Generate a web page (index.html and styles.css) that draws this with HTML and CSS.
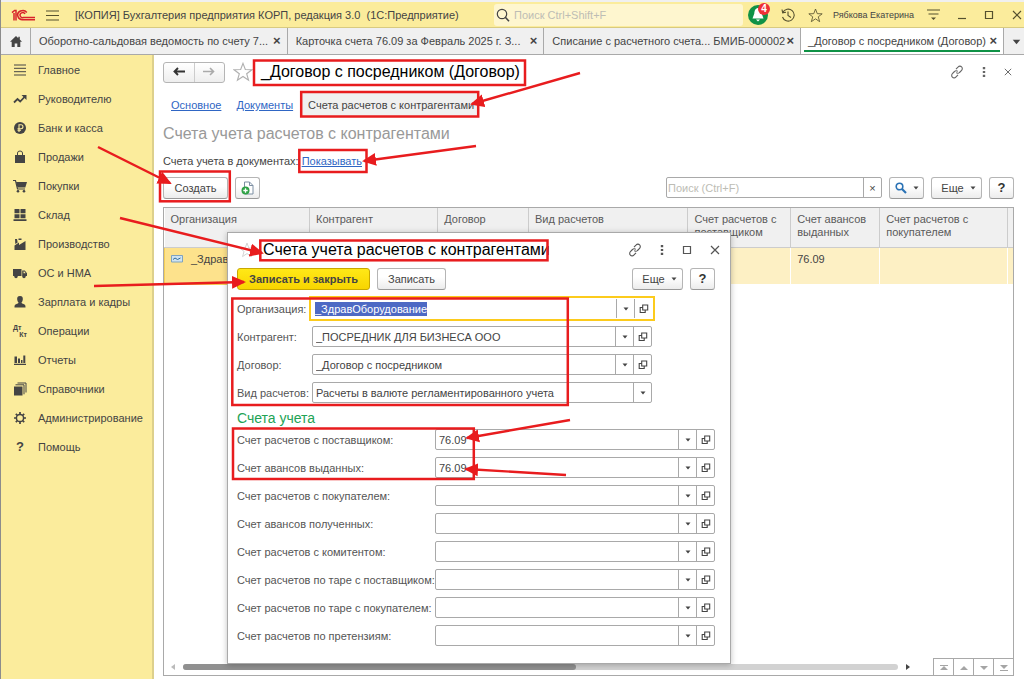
FILE: index.html
```html
<!DOCTYPE html>
<html lang="ru">
<head>
  <meta charset="UTF-8" />
  <meta name="viewport" content="width=device-width, initial-scale=1.0" />
  <title>Бухгалтерия предприятия КОРП</title>
  <link rel="stylesheet" href="styles.css">
</head>
<body>
  <!-- shared icons -->
  <svg class="sprite" width="0" height="0">
    <symbol id="i-star" viewBox="0 0 18 18"><path d="M9 1.2l2.1 5.6 5.9.2-4.700 3.600 1.700 5.800L9 13l-5 3.400 1.700-5.800L1 7l5.900-.2z" fill="none" stroke="currentColor" stroke-linejoin="miter"/></symbol>
    <symbol id="i-link" viewBox="0 0 14 14"><path d="M6 4.200l2.200-2.300a2.300 2.300 0 0 1 3.400 0 2.400 2.400 0 0 1 0 3.400L9.500 7.500A2.300 2.300 0 0 1 6.200 7.600M8 9.800l-2.200 2.300a2.300 2.300 0 0 1-3.400 0 2.400 2.400 0 0 1 0-3.400l2.100-2.200a2.300 2.300 0 0 1 3.300-.1" fill="none" stroke="currentColor" stroke-width="1.100"/></symbol>
    <symbol id="i-dots" viewBox="0 0 4 12"><path d="M.8 1h2.400v2.200H.8zM.8 4.900h2.400v2.200H.8zM.8 8.800h2.400V11H.8z" fill="currentColor"/></symbol>
    <symbol id="i-x" viewBox="0 0 10 10"><path d="M1 1l8 8M9 1L1 9" fill="none" stroke="currentColor" stroke-width="1.200"/></symbol>
    <symbol id="i-square" viewBox="0 0 10 10"><path d="M1.500 1.500h7v7h-7z" fill="none" stroke="currentColor" stroke-width="1.200"/></symbol>
    <symbol id="i-down" viewBox="0 0 6 4"><path d="M.5.5h5L3 3.500z" fill="currentColor"/></symbol>
    <symbol id="i-open" viewBox="0 0 10 10"><path d="M3.700 1h5v5h-5zM3.500 3.500H1.200v5h5V6.500" fill="none" stroke="currentColor" stroke-width="1.100"/></symbol>
    <symbol id="i-zoom" viewBox="0 0 14 14"><circle cx="6" cy="6" r="4.700" fill="none" stroke="currentColor" stroke-width="1.200"/><path d="M9.300 9.300l3.700 4" stroke="currentColor" stroke-width="1.600"/></symbol>
  </svg>

  <div class="app">
    <header class="titlebar">
      <svg class="logo" width="24" height="12" viewBox="0 0 24 12"><path d="M1 3.600L3.600 1.500H5V11.500M3 4v7.500M15.800 3.500A5 4.600 0 1 0 12.500 10.700H24M14 5A2.600 2.500 0 1 0 12.500 8.500H24" fill="none" stroke="#d8232a" stroke-width="1.500"/></svg>
      <button class="icon-btn" aria-label="Меню"><svg width="13" height="11" viewBox="0 0 13 11"><path d="M0 1h13M0 5.500h13M0 10h13" stroke="currentColor" stroke-width="1.100"/></svg></button>
      <span class="app-title">[КОПИЯ] Бухгалтерия предприятия КОРП, редакция 3.0&nbsp; (1С:Предприятие)</span>
      <label class="top-search">
        <svg width="14" height="14"><use href="#i-zoom"/></svg>
        <input type="text" placeholder="Поиск Ctrl+Shift+F" aria-label="Поиск">
      </label>
      <div class="title-tools">
        <button class="bell" aria-label="Оповещения">
          <svg width="20" height="20" viewBox="0 0 20 20"><circle cx="10" cy="10" r="10" fill="#0f9246"/><path d="M10 3c-3 .5-3.500 3-3.700 5.500L4.500 13.500h11l-1.800-5C13.500 6 13 3.500 10 3zM8 14.500h4l-2 2z" fill="#fff"/></svg>
          <span class="badge">4</span>
        </button>
        <button class="icon-btn" aria-label="История"><svg width="14" height="14" viewBox="0 0 14 14"><path d="M1.800 4.500A6 6 0 1 1 1.500 9M1 1.500l.7 3.300L5 4.300M7 3.500V7.500l3 2" fill="none" stroke="currentColor" stroke-width="1.100"/></svg></button>
        <button class="icon-btn" aria-label="Избранное"><svg width="15" height="15"><use href="#i-star"/></svg></button>
        <span class="user">Рябкова Екатерина</span>
        <button class="icon-btn" aria-label="Настройки"><svg width="13" height="12" viewBox="0 0 13 12"><path d="M0 1h13M1.500 5h10" stroke="currentColor" stroke-width="1.200"/><path d="M4 8.500h5L6.500 11z" fill="currentColor"/></svg></button>
      </div>
      <div class="window-tools">
        <button class="icon-btn" aria-label="Свернуть"><svg width="8" height="10" viewBox="0 0 8 10"><path d="M0 8.500h8" stroke="currentColor" stroke-width="1.200"/></svg></button>
        <button class="icon-btn" aria-label="Развернуть"><svg width="10" height="10"><use href="#i-square"/></svg></button>
        <button class="icon-btn" aria-label="Закрыть"><svg width="10" height="10"><use href="#i-x"/></svg></button>
      </div>
    </header>

    <nav class="tabs">
      <a class="home" href="#" aria-label="Начальная страница"><svg width="12" height="11" viewBox="0 0 12 11"><path d="M6 0L0 5.800h1.700V11h3V7.500h2.600V11h3V5.800H12L9.800 3.600V.8H8.300v1.400z" fill="currentColor"/></svg></a>
      <div class="tab"><a href="#">Оборотно-сальдовая ведомость по счету 7...</a><button aria-label="Закрыть">×</button></div>
      <div class="tab"><a href="#">Карточка счета 76.09 за Февраль 2025 г. З...</a><button aria-label="Закрыть">×</button></div>
      <div class="tab"><a href="#">Списание с расчетного счета... БМИБ-000002</a><button aria-label="Закрыть">×</button></div>
      <div class="tab active"><a href="#">_Договор с посредником (Договор)</a><button aria-label="Закрыть">×</button></div>
      <button class="tab-more" aria-label="Все вкладки"><svg width="9" height="6"><use href="#i-down"/></svg></button>
    </nav>

    <div class="workspace">
      <aside class="sidebar">
        <a href="#"><svg viewBox="0 0 14 14"><path d="M1 2h12M1 5.300h12M1 8.700h12M1 12h12" stroke="currentColor" fill="none"/></svg>Главное</a>
        <a href="#"><svg viewBox="0 0 14 14"><path d="M1 10.500l3.500-3.500 2.700 2.500L11.500 5" stroke="currentColor" stroke-width="1.800" fill="none"/><path d="M8.500 3H13.500v5z" fill="currentColor"/></svg>Руководителю</a>
        <a href="#"><svg viewBox="0 0 14 14"><circle cx="7" cy="7" r="6" fill="currentColor"/><path d="M6 11V3.800h2a1.900 1.900 0 0 1 0 3.900H4.500M4.500 9.300H8" stroke="#fbec9c" stroke-width="1.100" fill="none"/></svg>Банк и касса</a>
        <a href="#"><svg viewBox="0 0 14 14"><path d="M2 5h10v8H2z" fill="currentColor"/><path d="M4.500 6.500V3a2.500 2 0 0 1 5 0v3.500" stroke="currentColor" fill="none"/></svg>Продажи</a>
        <a href="#"><svg viewBox="0 0 14 14"><path d="M3 3h11l-1.700 5.500H4.500z" fill="currentColor"/><path d="M0 1.500h2.500l2 8.500H12" stroke="currentColor" stroke-width="1.200" fill="none"/><circle cx="5" cy="12.200" r="1.300" fill="currentColor"/><circle cx="11" cy="12.200" r="1.300" fill="currentColor"/></svg>Покупки</a>
        <a href="#"><svg viewBox="0 0 14 14"><path d="M1.500 1h5v4.300h-5zM7.500 1h5v4.300h-5zM1.500 6.200h5v4h-5zM7.500 6.200h5v4h-5zM.5 11.300h13V13H.5z" fill="currentColor"/></svg>Склад</a>
        <a href="#"><svg viewBox="0 0 14 14"><path d="M1.500 13V8.500L6 5.500V8l6.500-4V13zM2 2h2l.7 3.500L2.300 7zM5.500 1.500h3V3h-3z" fill="currentColor"/></svg>Производство</a>
        <a href="#"><svg viewBox="0 0 14 14"><path d="M0 3h8.500v7H0zM9.200 4.500h2.600L14 7.300V10H9.200z" fill="currentColor"/><circle cx="3" cy="10.500" r="1.700" fill="currentColor"/><circle cx="11" cy="10.500" r="1.700" fill="currentColor"/><path d="M10.500 5.500h1l1.200 1.700h-2.200z" fill="#fbec9c"/></svg>ОС и НМА</a>
        <a href="#"><svg viewBox="0 0 14 14"><path d="M7 1C4.500 1 4 2.800 4.200 4.500 4.400 6 5 7 5.500 7.500c0 1-1 1.200-2.500 1.700S1.500 11 1.500 12.500h11c0-1.500 0-2.800-1.500-3.300s-2.500-.7-2.500-1.700C9 7 9.600 6 9.800 4.500 10 2.800 9.500 1 7 1z" fill="currentColor"/></svg>Зарплата и кадры</a>
        <a href="#"><span class="dtkt"><b>Дт</b><b>Кт</b></span>Операции</a>
        <a href="#"><svg viewBox="0 0 14 14"><path d="M1.500 3.500H4V10H1.500zM5 5.500h2V10H5zM8 7h1.500v3H8zM10.300 2.500h2V10h-2zM1 10.800h12V12H1z" fill="currentColor"/></svg>Отчеты</a>
        <a href="#"><svg viewBox="0 0 14 14"><path d="M1 4.500h8.500v9H1z" fill="currentColor"/><path d="M2.500 2.800h8.500v9.500M4.500 1h8.500v9.500" stroke="currentColor" fill="none"/></svg>Справочники</a>
        <a href="#"><svg viewBox="0 0 14 14"><circle cx="7" cy="7" r="3.600" stroke="currentColor" stroke-width="1.500" fill="none"/><path d="M7 1v2.500M7 10.500V13M1 7h2.500M10.500 7H13M2.800 2.800l1.700 1.700M9.500 9.500l1.700 1.700M11.200 2.800L9.500 4.500M4.500 9.500l-1.700 1.700" stroke="currentColor" stroke-width="1.700"/></svg>Администрирование</a>
        <a href="#"><b class="help">?</b>Помощь</a>
      </aside>

      <main class="page">
        <div class="page-head">
          <div class="nav-btns">
            <button aria-label="Назад"><svg width="12" height="9" viewBox="0 0 12 9"><path d="M5 1L1.500 4.500 5 8M1.500 4.500H12" fill="none" stroke="#333" stroke-width="1.900"/></svg></button>
            <button aria-label="Вперед"><svg width="12" height="9" viewBox="0 0 12 9"><path d="M7 1l3.500 3.500L7 8M10.500 4.500H0" fill="none" stroke="#aaa" stroke-width="1.600"/></svg></button>
          </div>
          <svg class="fav" width="20" height="20"><use href="#i-star"/></svg>
          <h1>_Договор с посредником (Договор)</h1>
          <div class="page-tools">
            <button class="icon-btn" aria-label="Ссылка"><svg width="14" height="14"><use href="#i-link"/></svg></button>
            <button class="icon-btn" aria-label="Еще"><svg width="4" height="12"><use href="#i-dots"/></svg></button>
            <button class="icon-btn" aria-label="Закрыть"><svg width="8" height="8"><use href="#i-x"/></svg></button>
          </div>
        </div>

        <nav class="subnav">
          <a href="#">Основное</a>
          <a href="#">Документы</a>
          <span class="current">Счета расчетов с контрагентами</span>
        </nav>

        <h2>Счета учета расчетов с контрагентами</h2>
        <p class="docs">Счета учета в документах: <a href="#">Показывать</a></p>

        <div class="toolbar">
          <button class="btn create">Создать</button>
          <button class="btn small" aria-label="Создать копированием"><svg width="13" height="14" viewBox="0 0 13 14"><path d="M3.500 1h5L12 4.500v8.500H3.500zM8.500 1v3.500H12" fill="#fff" stroke="#7d8fa3"/><circle cx="4.500" cy="9.500" r="4" fill="#2fa145"/><path d="M4.500 7.300v4.400M2.300 9.500h4.400" stroke="#fff" stroke-width="1.300"/></svg></button>
          <div class="search">
            <input type="text" placeholder="Поиск (Ctrl+F)" aria-label="Поиск в списке">
            <button aria-label="Очистить">×</button>
          </div>
          <button class="btn find" aria-label="Найти"><svg width="12" height="12" viewBox="0 0 12 12"><circle cx="4.500" cy="4.500" r="3.300" fill="none" stroke="#2a72b5" stroke-width="1.600"/><path d="M7 7l4 4" stroke="#2a72b5" stroke-width="2.200"/></svg><svg width="6" height="4"><use href="#i-down"/></svg></button>
          <button class="btn more">Еще <svg width="6" height="4"><use href="#i-down"/></svg></button>
          <button class="btn small question">?</button>
        </div>

        <div class="list">
          <table>
            <colgroup>
              <col class="c-org"><col class="c-agent"><col class="c-contract"><col class="c-kind"><col class="c-supplier"><col class="c-advance"><col class="c-buyer"><col class="c-rest">
            </colgroup>
            <thead>
              <tr><th>Организация</th><th>Контрагент</th><th>Договор</th><th>Вид расчетов</th><th>Счет расчетов с поставщиком</th><th>Счет авансов выданных</th><th>Счет расчетов с покупателем</th><th></th></tr>
            </thead>
            <tbody>
              <tr><td class="selected"><svg width="12" height="8" viewBox="0 0 12 8"><path d="M.5.5h11v6.500H.5z" fill="#cfe3f1" stroke="#7fa3bf"/><path d="M2 4.500l2-1.500 2.500 1.500 3-1.500" fill="none" stroke="#2f6c9c"/></svg>_Здрав</td><td></td><td></td><td></td><td></td><td>76.09</td><td></td><td></td></tr>
            </tbody>
          </table>
          <div class="list-foot">
            <svg class="scroll-arrow off" width="4" height="6" viewBox="0 0 4 6"><path d="M4 0v6L0 3z" fill="currentColor"/></svg>
            <div class="track"><div class="thumb"></div></div>
            <svg class="scroll-arrow" width="4" height="6" viewBox="0 0 4 6"><path d="M0 0v6l4-3z" fill="currentColor"/></svg>
            <div class="pager">
              <button aria-label="В начало"><svg width="8" height="6" viewBox="0 0 8 6"><path d="M0 0h8v1H0zM4 1l4 4H0z" fill="currentColor"/></svg></button>
              <button aria-label="Вверх"><svg width="8" height="6" viewBox="0 0 8 6"><path d="M4 1l4 4H0z" fill="currentColor"/></svg></button>
              <button aria-label="Вниз"><svg width="8" height="6" viewBox="0 0 8 6"><path d="M0 1h8L4 5z" fill="currentColor"/></svg></button>
              <button aria-label="В конец"><svg width="8" height="6" viewBox="0 0 8 6"><path d="M0 0h8L4 4zM0 5h8v1H0z" fill="currentColor"/></svg></button>
            </div>
          </div>
        </div>
      </main>
    </div>

    <section class="dialog" role="dialog" aria-labelledby="dlgTitle">
      <div class="dialog-head">
        <svg class="fav" width="16" height="16"><use href="#i-star"/></svg>
        <h2 id="dlgTitle">Счета учета расчетов с контрагентами</h2>
        <div class="dialog-tools">
          <button class="icon-btn" aria-label="Ссылка"><svg width="14" height="14"><use href="#i-link"/></svg></button>
          <button class="icon-btn" aria-label="Еще"><svg width="4" height="12"><use href="#i-dots"/></svg></button>
          <button class="icon-btn" aria-label="Развернуть"><svg width="10" height="10"><use href="#i-square"/></svg></button>
          <button class="icon-btn" aria-label="Закрыть"><svg width="10" height="10"><use href="#i-x"/></svg></button>
        </div>
      </div>
      <div class="dialog-bar">
        <button class="btn primary">Записать и закрыть</button>
        <button class="btn save">Записать</button>
        <button class="btn more">Еще <svg width="6" height="4"><use href="#i-down"/></svg></button>
        <button class="btn small question">?</button>
      </div>

      <form class="form main-form">
        <div class="row"><label for="org">Организация:</label><div class="field focus"><input id="org" type="text" value="_ЗдравОборудование"><button type="button" aria-label="Выбрать"><svg width="6" height="4"><use href="#i-down"/></svg></button><button type="button" aria-label="Открыть"><svg width="10" height="10"><use href="#i-open"/></svg></button></div></div>
        <div class="row"><label for="agent">Контрагент:</label><div class="field"><input id="agent" type="text" value="_ПОСРЕДНИК ДЛЯ БИЗНЕСА ООО"><button type="button" aria-label="Выбрать"><svg width="6" height="4"><use href="#i-down"/></svg></button><button type="button" aria-label="Открыть"><svg width="10" height="10"><use href="#i-open"/></svg></button></div></div>
        <div class="row"><label for="contract">Договор:</label><div class="field"><input id="contract" type="text" value="_Договор с посредником"><button type="button" aria-label="Выбрать"><svg width="6" height="4"><use href="#i-down"/></svg></button><button type="button" aria-label="Открыть"><svg width="10" height="10"><use href="#i-open"/></svg></button></div></div>
        <div class="row"><label for="kind">Вид расчетов:</label><div class="field"><select id="kind"><option>Расчеты в валюте регламентированного учета</option></select><button type="button" aria-label="Выбрать"><svg width="6" height="4"><use href="#i-down"/></svg></button></div></div>
      </form>

      <h3>Счета учета</h3>
      <form class="form accounts" id="accounts"></form>
    </section>

    <!-- red marks over the window -->
    <svg class="marks" width="1024" height="679" viewBox="0 0 1024 679">
      <defs>
        <marker id="head" markerUnits="userSpaceOnUse" markerWidth="15" markerHeight="14" refX="12" refY="7" orient="auto"><path d="M0 0.500l14 6.500-14 6.500z" fill="#e81c1e"/></marker>
      </defs>
      <g fill="none" stroke="#e81c1e" stroke-width="2.500">
        <rect x="254" y="60.500" width="271" height="24.500"/>
        <rect x="301.200" y="92" width="177" height="24.500"/>
        <rect x="299.300" y="150" width="67.200" height="22"/>
        <rect x="160" y="171.500" width="69.800" height="29.800"/>
        <rect x="260.300" y="240.500" width="287.200" height="19.800"/>
        <rect x="232.300" y="298.500" width="335.500" height="106.500"/>
        <rect x="233" y="428.500" width="240.800" height="50.500"/>
      </g>
      <g stroke="#e81c1e" stroke-width="2.400">
        <path d="M580 73L472 104" marker-end="url(#head)"/>
        <path d="M476 146L364 161" marker-end="url(#head)"/>
        <path d="M98 147L170 183" marker-end="url(#head)"/>
        <path d="M120 218L262 253" marker-end="url(#head)"/>
        <path d="M94 286L244 282" marker-end="url(#head)"/>
        <path d="M570 420L467 438" marker-end="url(#head)"/>
        <path d="M566 475L466 469" marker-end="url(#head)"/>
      </g>
    </svg>
  </div>

  <script src="script.js"></script>
</body>
</html>
```

FILE: styles.css
```css
:root {
  --yellow: #fbec9c;
  --line: #a9a9a9;
  --text: #444;
  --green: #0f9246;
}

* {
  box-sizing: border-box;
  margin: 0;
  padding: 0;
}

body {
  font: 11px/14px "Liberation Sans", Arial, sans-serif;
  color: var(--text);
  background: #fff;
}

button, input, select {
  font: inherit;
  color: inherit;
  border: none;
  background: none;
  outline: none;
}

button {
  cursor: pointer;
}

a {
  color: #2f66c4;
}

.sprite {
  position: absolute;
}

.app {
  position: relative;
  display: flex;
  flex-direction: column;
  height: 100vh;
  border-left: 1px solid #8c8c8c;
  overflow: hidden;
}

.icon-btn {
  display: flex;
  align-items: center;
  justify-content: center;
}

/* window title */
.titlebar {
  display: flex;
  align-items: center;
  height: 28px;
  padding: 1px 2px 0 10px;
  background: var(--yellow);
  border-top: 2px solid #f0f0f0;
  border-bottom: 1px solid #d8ca80;
}

.titlebar .icon-btn {
  color: #55502f;
}

.logo {
  margin-right: 11px;
}

.app-title {
  flex: 1;
  margin-left: 16px;
  white-space: nowrap;
}

.top-search {
  display: flex;
  align-items: center;
  gap: 4px;
  width: 249px;
  height: 22px;
  padding-left: 2px;
  background: #fef6cf;
  border-radius: 3px;
}

.top-search input {
  flex: 1;
  min-width: 0;
}

input::placeholder {
  color: #bdbdb5;
  opacity: 1;
}

.title-tools {
  display: flex;
  align-items: center;
  gap: 13px;
  margin-left: 5px;
}

.user {
  margin-left: -3px;
  font-size: 9px;
  white-space: nowrap;
}

.bell {
  position: relative;
  height: 20px;
}

.badge {
  position: absolute;
  top: -2px;
  right: -2px;
  width: 12px;
  height: 12px;
  border-radius: 50%;
  background: #ee2f35;
  color: #fff;
  font-size: 10px;
  font-weight: bold;
  line-height: 12px;
}

.window-tools {
  display: flex;
  align-items: center;
  gap: 18px;
  margin-left: 18px;
}

/* open windows */
.tabs {
  display: flex;
  height: 27px;
  background: #f0f0f0;
  border-bottom: 1px solid var(--line);
}

.home {
  display: flex;
  align-items: center;
  justify-content: center;
  width: 29px;
  color: #444;
}

.tab {
  position: relative;
  display: flex;
  align-items: center;
  justify-content: space-between;
  flex: 257 1 0;
  min-width: 0;
  padding: 0 6px 0 8px;
  border-left: 1px solid var(--line);
  white-space: nowrap;
}

.tab a {
  color: var(--text);
  text-decoration: none;
}

.tab button {
  font-size: 13px;
  font-weight: bold;
}

.tab.active {
  flex: none;
  width: 203px;
  padding-left: 7px;
  background: #fff;
}

.tab.active::after {
  content: "";
  position: absolute;
  left: 3px;
  right: 3px;
  bottom: 2px;
  height: 2px;
  background: var(--green);
}

.tab-more {
  width: 21px;
  padding-left: 4px;
  border-left: 1px solid var(--line);
}

/* sections */
.workspace {
  display: flex;
  flex: 1;
  min-height: 0;
}

.sidebar {
  flex: none;
  width: 153px;
  background: var(--yellow);
  border-right: 2px solid #ddd08c;
}

.sidebar a {
  display: flex;
  align-items: center;
  gap: 11px;
  height: 29px;
  padding-left: 12px;
  color: var(--text);
  text-decoration: none;
}

.sidebar svg {
  width: 14px;
  height: 14px;
  flex: none;
}

.dtkt {
  display: flex;
  flex-direction: column;
  width: 14px;
  font-size: 7px;
  line-height: 7px;
}

.dtkt b:last-child {
  align-self: flex-end;
}

.help {
  width: 14px;
  font-size: 13px;
  text-align: center;
}

/* page */
.page {
  display: flex;
  flex-direction: column;
  flex: 1;
  min-width: 0;
  padding: 6px 10px 3px 9px;
}

.page-head {
  display: flex;
  align-items: center;
  height: 22px;
}

.nav-btns {
  display: flex;
  width: 62px;
  height: 21px;
  border: 1px solid #b5b5b5;
  border-radius: 3px;
  background: linear-gradient(#fff, #eee);
}

.nav-btns button {
  flex: 1;
}

.nav-btns button + button {
  border-left: 1px solid #ccc;
}

.fav {
  color: #b0b0b0;
}

.page-head .fav {
  margin: 0 8px;
}

h1, h2, h3 {
  font-weight: normal;
}

h1 {
  font-size: 16px;
  line-height: 20px;
  color: #000;
}

.page-tools {
  display: flex;
  align-items: center;
  gap: 18px;
  margin-left: auto;
  padding-right: 2px;
  color: #666;
}

.subnav {
  display: flex;
  align-items: center;
  gap: 15px;
  height: 24px;
  margin-top: 10px;
  padding-left: 8px;
}

.current {
  margin-left: -8px;
  padding: 5px 4px 5px 8px;
  background: #f0f0f0;
}

.page h2 {
  margin-top: 7px;
  font-size: 16px;
  line-height: 20px;
  color: #999;
}

.docs {
  margin-top: 10px;
}

.toolbar {
  display: flex;
  gap: 7px;
  height: 22px;
  margin-top: 9px;
}

.btn {
  display: flex;
  align-items: center;
  justify-content: center;
  gap: 6px;
  height: 22px;
  border: 1px solid #b5b5b5;
  border-bottom-color: #999;
  border-radius: 3px;
  background: linear-gradient(#fff 40%, #ececec);
}

.create {
  width: 65px;
}

.small {
  width: 25px;
}

.more {
  width: 51px;
  padding-left: 4px;
}

.find {
  width: 35px;
}

.question {
  font-size: 13px;
  font-weight: bold;
  color: #333;
}

.search {
  display: flex;
  width: 216px;
  height: 21px;
  margin-left: auto;
  border: 1px solid var(--line);
  border-radius: 2px;
}

.search input {
  flex: 1;
  min-width: 0;
  padding: 0 1px;
}

.search button {
  width: 18px;
  border-left: 1px solid var(--line);
}

.list {
  display: flex;
  flex-direction: column;
  justify-content: space-between;
  flex: 1;
  margin-top: 8px;
  border: 1px solid var(--line);
}

table {
  width: 100%;
  table-layout: fixed;
  border-collapse: collapse;
  line-height: 13px;
}

th {
  height: 39px;
  padding: 5px 6px 0;
  background: #f0f0f0;
  border-left: 1px solid #ccc;
  border-bottom: 1px solid #ccc;
  color: #5a5a5a;
  font-weight: normal;
  text-align: left;
  vertical-align: top;
}

td {
  height: 37px;
  padding: 5px 6px 0;
  background: #fdf0c4;
  border-left: 1px solid #fff;
  vertical-align: top;
  white-space: nowrap;
  overflow: hidden;
}

th:first-child, td:first-child {
  border-left: none;
}

td svg {
  margin-right: 8px;
}

td.selected {
  background: #fde28c;
  border: 1px solid #f5cf56;
}

.c-org { width: 17.100%; }
.c-agent { width: 15.100%; }
.c-contract { width: 10.700%; }
.c-kind { width: 18.800%; }
.c-supplier { width: 12.100%; }
.c-advance { width: 10.500%; }
.c-buyer { width: 15.100%; }

.list-foot {
  display: flex;
  align-items: center;
  gap: 8px;
  height: 17px;
  padding-left: 7px;
}

.scroll-arrow {
  color: #444;
}

.scroll-arrow.off {
  color: #bbb;
}

.track {
  flex: 1;
  height: 6px;
  border-radius: 3px;
  background: #d2d2d2;
}

.thumb {
  width: 55%;
  height: 6px;
  border-radius: 3px;
  background: #909090;
}

.pager {
  display: flex;
  height: 17px;
  margin-left: 15px;
  border-top: 1px solid var(--line);
  color: #a5a5a5;
}

.pager button {
  width: 20px;
  border-left: 1px solid var(--line);
}

/* dialog */
.dialog {
  position: absolute;
  left: 226px;
  top: 232px;
  width: 504px;
  padding: 6px 15px 17px 9px;
  background: #fff;
  border: 1px solid var(--line);
  box-shadow: 0 1px 6px rgba(0, 0, 0, 0.25);
}

.dialog-head {
  display: flex;
  align-items: center;
  height: 22px;
}

.dialog-head .fav {
  margin: 0 8px 0 2px;
  color: #ccc;
}

.dialog-head h2 {
  font-size: 16px;
  line-height: 20px;
  color: #000;
}

.dialog-tools {
  display: flex;
  align-items: center;
  gap: 18px;
  margin-left: auto;
  margin-right: -5px;
  color: #555;
}

.dialog-bar {
  display: flex;
  gap: 7px;
  margin: 7px 0 8px;
}

.primary {
  width: 133px;
  border-color: #c9a800;
  background: linear-gradient(#ffe817, #f8d500);
  font-weight: bold;
}

.save {
  width: 69px;
}

.dialog-bar .more {
  margin-left: auto;
}

.form {
  display: flex;
  flex-direction: column;
  gap: 7px;
}

.row {
  display: flex;
  align-items: center;
  height: 21px;
}

.row label {
  flex: none;
  width: 75px;
  color: #555;
  white-space: nowrap;
}

.main-form {
  padding-right: 63px;
}

.accounts .row label {
  width: 198px;
}

.field {
  display: flex;
  flex: 1;
  min-width: 0;
  height: 21px;
  border: 1px solid var(--line);
  border-radius: 2px;
}

.field.focus {
  height: 25px;
  margin: 0 -3px;
  padding: 1px;
  border: 2px solid #fccb1c;
  border-radius: 0;
}

.field input, .field select {
  flex: 1;
  min-width: 0;
  padding: 0 3px;
  appearance: none;
}

.field button {
  display: flex;
  align-items: center;
  justify-content: center;
  width: 18px;
  border-left: 1px solid var(--line);
}

.field input::selection {
  background: #4d69c4;
  color: #fff;
}

h3 {
  margin: 6px 0 2px;
  font-size: 14px;
  line-height: 18px;
  color: #22a355;
}

/* red marks */
.marks {
  position: absolute;
  left: -1px;
  top: 0;
  pointer-events: none;
}
```

FILE: script.js
```js
const accounts = [
  { label: "Счет расчетов с поставщиком:", value: "76.09" },
  { label: "Счет авансов выданных:", value: "76.09" },
  { label: "Счет расчетов с покупателем:", value: "" },
  { label: "Счет авансов полученных:", value: "" },
  { label: "Счет расчетов с комитентом:", value: "" },
  { label: "Счет расчетов по таре с поставщиком:", value: "" },
  { label: "Счет расчетов по таре с покупателем:", value: "" },
  { label: "Счет расчетов по претензиям:", value: "" }
];

document.getElementById("accounts").innerHTML = accounts.map((item, i) => `
  <div class="row">
    <label for="acc${i}">${item.label}</label>
    <div class="field">
      <input id="acc${i}" type="text" value="${item.value}">
      <button type="button" aria-label="Выбрать"><svg width="6" height="4"><use href="#i-down"/></svg></button>
      <button type="button" aria-label="Открыть"><svg width="10" height="10"><use href="#i-open"/></svg></button>
    </div>
  </div>`).join("");

const org = document.getElementById("org");
org.focus();
org.select();
```
